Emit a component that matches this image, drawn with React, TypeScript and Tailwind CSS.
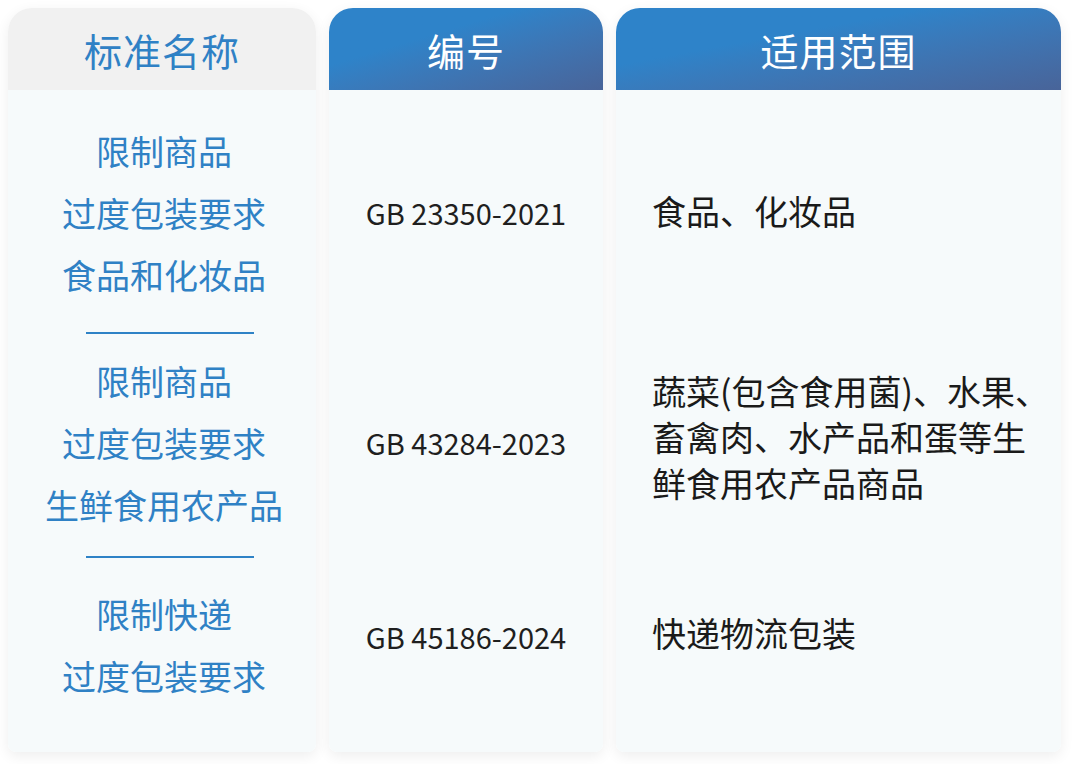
const font = { fontFamily: '"Noto Sans CJK SC", "Noto Sans", sans-serif' };

const names = [
  ["限制商品", "过度包装要求", "食品和化妆品"],
  ["限制商品", "过度包装要求", "生鲜食用农产品"],
  ["限制快递", "过度包装要求"],
];

export default function App() {
  return (
    <div className="w-[1072px] h-[764px] bg-white overflow-hidden pt-2 px-2 flex gap-[13px]" style={font}>
      {/* 标准名称 */}
      <div className="w-[308px] h-[744px] flex flex-col rounded-t-[24px] rounded-b-lg shadow-[0_4px_14px_rgba(0,0,0,0.07)] overflow-hidden">
        <div className="h-[82px] bg-[#f1f1f1] flex items-center justify-center text-[38px] text-[#2f81c5] tracking-[1px]">
          标准名称
        </div>
        <div className="flex-1 bg-[#f6fafb] flex flex-col items-center text-[34px] text-[#2f81c5] leading-[62px] pl-1">
          <div className="h-[242px] flex flex-col items-center justify-center pt-1">
            {names[0].map((t) => <span key={t}>{t}</span>)}
          </div>
          <div className="w-[168px] h-[2px] bg-[#2e82c6] self-start ml-[74px]" />
          <div className="h-[222px] flex flex-col items-center justify-center pb-1">
            {names[1].map((t) => <span key={t}>{t}</span>)}
          </div>
          <div className="w-[168px] h-[2px] bg-[#2e82c6] self-start ml-[74px]" />
          <div className="flex-1 flex flex-col items-center justify-center pb-5">
            {names[2].map((t) => <span key={t}>{t}</span>)}
          </div>
        </div>
      </div>

      {/* 编号 */}
      <div className="w-[274px] h-[744px] flex flex-col rounded-t-[24px] rounded-b-lg shadow-[0_4px_14px_rgba(0,0,0,0.07)] overflow-hidden">
        <div className="h-[82px] bg-linear-to-br from-[#2e83c9] from-35% to-[#486499] flex items-center justify-center text-[38px] text-white tracking-[1px]">
          编号
        </div>
        <div className="flex-1 bg-[#f6fafb] flex flex-col text-[29px] text-[#1f1f1f]">
          <div className="h-[242px] flex items-center justify-center pt-1">GB 23350-2021</div>
          <div className="h-[2px]" />
          <div className="h-[222px] flex items-center justify-center pb-1">GB 43284-2023</div>
          <div className="h-[2px]" />
          <div className="flex-1 flex items-center justify-center pb-[36px]">GB 45186-2024</div>
        </div>
      </div>

      {/* 适用范围 */}
      <div className="w-[445px] h-[744px] flex flex-col rounded-t-[24px] rounded-b-lg shadow-[0_4px_14px_rgba(0,0,0,0.07)] overflow-hidden">
        <div className="h-[82px] bg-linear-to-br from-[#2e83c9] from-35% to-[#486499] flex items-center justify-center text-[38px] text-white tracking-[1px]">
          适用范围
        </div>
        <div className="flex-1 bg-[#f6fafb] flex flex-col text-[34px] text-[#1a1a1a] pl-9 leading-[46px]">
          <div className="h-[242px] flex items-center">食品、化妆品</div>
          <div className="h-[2px]" />
          <div className="h-[222px] flex flex-col justify-center pb-4 whitespace-nowrap">
            <span>蔬菜(包含食用菌)、水果、</span>
            <span>畜禽肉、水产品和蛋等生</span>
            <span>鲜食用农产品商品</span>
          </div>
          <div className="h-[2px]" />
          <div className="flex-1 flex items-center pb-[44px]">快递物流包装</div>
        </div>
      </div>
    </div>
  );
}
